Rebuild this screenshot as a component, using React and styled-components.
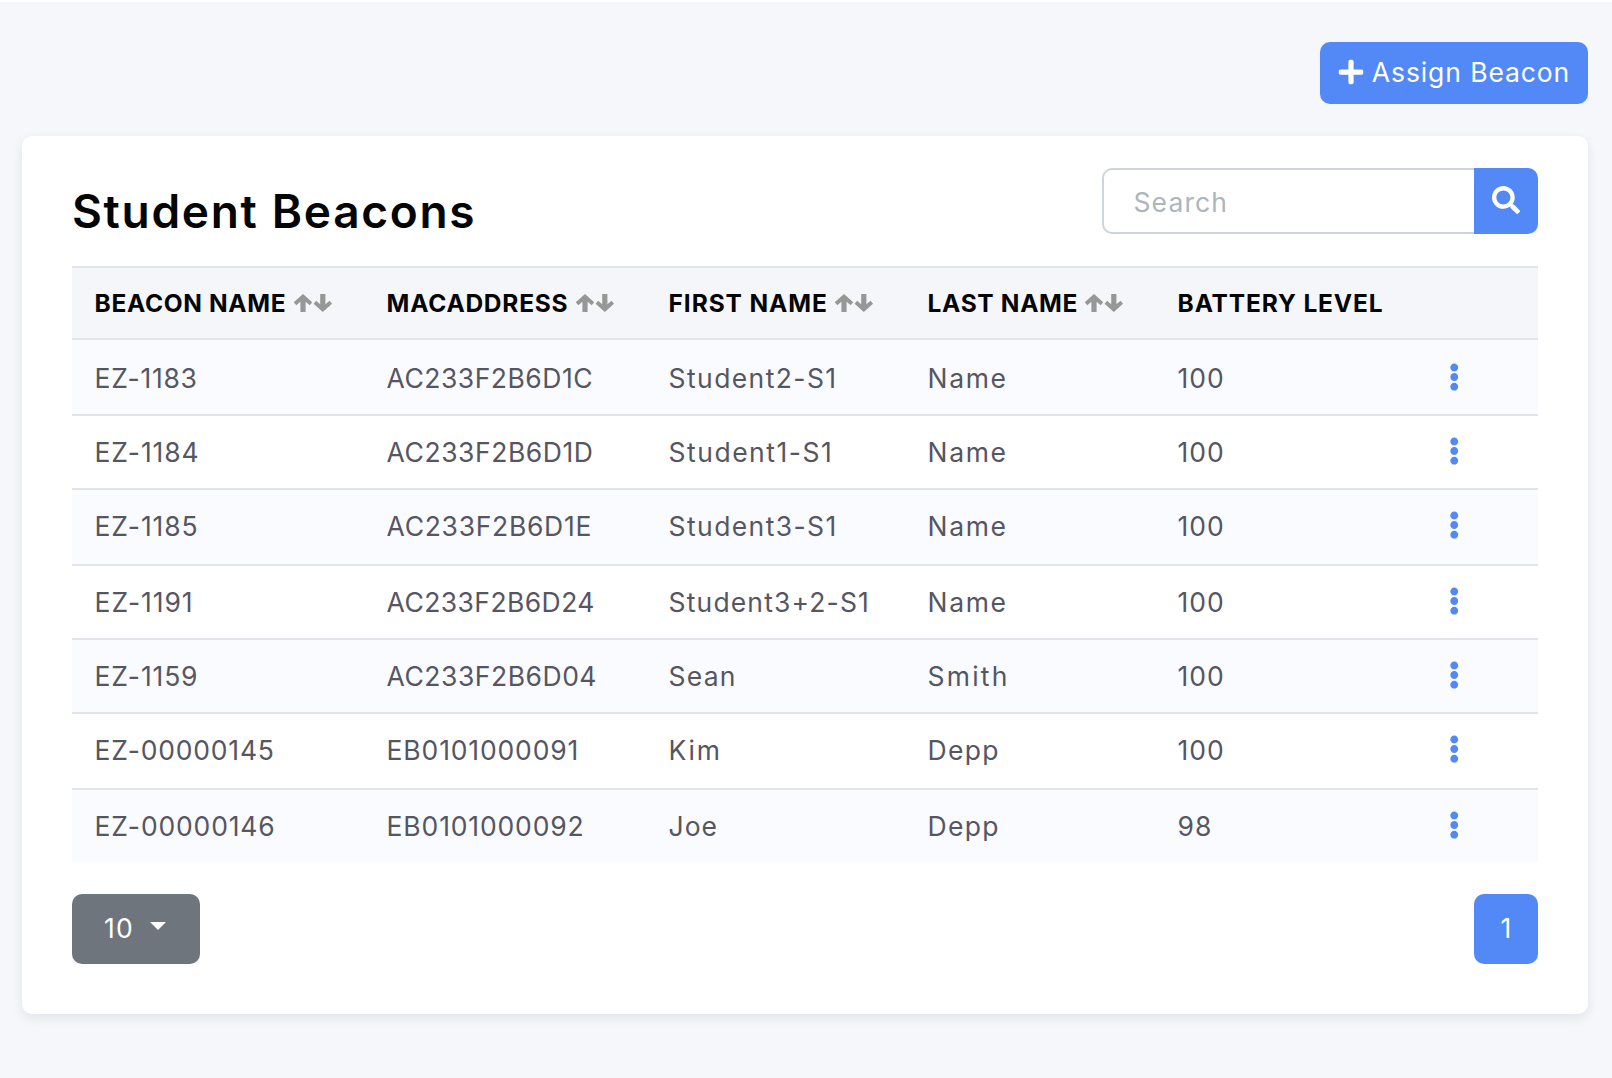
import React from "react";
import styled, { createGlobalStyle } from "styled-components";
import { FaPlus, FaSearch, FaEllipsisV } from "react-icons/fa";

const color = {
  page: "#f5f7fb",
  primary: "#5289f7",
  secondary: "#6e757c",
  heading: "#050505",
  text: "#555662",
  line: "#e2e4e9",
  stripe: "#fafbff",
  sort: "#979797",
};

const GlobalStyle = createGlobalStyle`
  *, *::before, *::after { box-sizing: border-box; }
  body {
    margin: 0;
    background: ${color.page};
    color: ${color.text};
    font-family: Inter, "Liberation Sans", sans-serif;
    font-size: 26.5px;
    line-height: 38px;
  }
  button, input { font: inherit; }
`;

const Page = styled.main`
  min-height: 1078px;
  padding: 40px 24px 64px 22px;
  border-top: 2px solid #fff;
`;

const Toolbar = styled.div`
  display: flex;
  justify-content: flex-end;
  margin-bottom: 32px;
`;

const PrimaryButton = styled.button`
  display: flex;
  align-items: center;
  justify-content: center;
  border: 0;
  color: #fff;
  background: ${color.primary};
`;

const AssignButton = styled(PrimaryButton)`
  width: 268px;
  height: 62px;
  padding: 0 1px 2px 0;
  gap: 7px;
  border-radius: 10px;
`;

const Card = styled.section`
  padding: 32px 50px 50px;
  border-radius: 10px;
  background: #fff;
  box-shadow: 0 4px 12px rgba(20, 20, 40, 0.085);
`;

const CardHeader = styled.header`
  display: flex;
  justify-content: space-between;
  align-items: flex-start;
  height: 98px;
`;

const Title = styled.h1`
  margin: 16px 0 0;
  font-size: 46px;
  line-height: 54px;
  font-weight: 600;
  letter-spacing: 1.7px;
  color: ${color.heading};
`;

const SearchGroup = styled.div`
  display: flex;
  height: 66px;
`;

const SearchInput = styled.input`
  width: 372px;
  padding: 1px 12px 0 29.5px;
  border: 2px solid #ced4d9;
  border-right: 0;
  border-radius: 10px 0 0 10px;
  outline: 0;
  background: #fff;
  letter-spacing: 1.1px;
  &::placeholder { color: #adb5bd; opacity: 1; }
`;

const SearchButton = styled(PrimaryButton)`
  width: 64px;
  padding: 0 0 3px;
  border-radius: 0 10px 10px 0;
`;

const Table = styled.div`
  display: flex;
  flex-direction: column;
`;

const Row = styled.div`
  display: grid;
  grid-template-columns: 292px 282px 259px 250px 271px 1fr;
  align-items: start;
  padding-left: 22.6px;
  border-top: 2px solid ${color.line};
`;

const HeadRow = styled(Row)`
  height: 72px;
  padding-top: 16px;
  background: #f5f6fa;
`;

const BodyRow = styled(Row)`
  height: ${(p) => (p.$tall ? 76 : 74)}px;
  padding-top: ${(p) => (p.$first ? 19 : 17)}px;
  background: ${(p) => (p.$striped ? color.stripe : "#fff")};
`;

const HeadCell = styled.div`
  display: flex;
  align-items: center;
  gap: 7.3px;
  font-size: 24.5px;
  font-weight: 700;
  color: ${color.heading};
  white-space: nowrap;
`;

const Text = styled.span`
  letter-spacing: ${(p) => p.$track || 0}px;
  white-space: nowrap;
`;

const MenuButton = styled.button`
  display: flex;
  width: 10.5px;
  height: 28px;
  margin-top: 4px;
  padding: 0;
  border: 0;
  background: none;
  color: ${color.primary};
  svg { width: 10.5px; height: 28px; }
`;

const SortArrows = styled.svg`
  flex: none;
  width: 38px;
  height: 18px;
  fill: ${color.sort};
`;

const CardFooter = styled.footer`
  display: flex;
  justify-content: space-between;
  margin-top: 32px;
`;

const PageSize = styled.button`
  display: flex;
  align-items: center;
  gap: 16.5px;
  width: 128px;
  height: 70px;
  padding: 0 0 2px 32px;
  border: 0;
  border-radius: 10px;
  color: #fff;
  background: ${color.secondary};
`;

const Caret = styled.span`
  margin-top: -4px;
  border-top: 8px solid #fff;
  border-left: 8px solid transparent;
  border-right: 8px solid transparent;
`;

const PageButton = styled(PrimaryButton)`
  width: 64px;
  height: 70px;
  padding: 0 0 2px;
  border-radius: 10px;
`;

const columns = [
  { label: "BEACON NAME", track: 0.65, sortable: true },
  { label: "MACADDRESS", track: 0.75, sortable: true },
  { label: "FIRST NAME", track: 0.9, sortable: true },
  { label: "LAST NAME", track: 0.65, sortable: true },
  { label: "BATTERY LEVEL", track: 0.85 },
];

/* Each cell is its text followed by its letter spacing. */
const beacons = [
  [["EZ-1183", 0.7], ["AC233F2B6D1C", 0.5], ["Student2-S1", 1.4], ["Name", 1.6], ["100", 0.9]],
  [["EZ-1184", 0.85], ["AC233F2B6D1D", 0.55], ["Student1-S1", 1.5], ["Name", 1.6], ["100", 0.9]],
  [["EZ-1185", 0.85], ["AC233F2B6D1E", 0.7], ["Student3-S1", 1.4], ["Name", 1.6], ["100", 0.9]],
  [["EZ-1191", 0.9], ["AC233F2B6D24", 0.42], ["Student3+2-S1", 1.15], ["Name", 1.6], ["100", 0.9]],
  [["EZ-1159", 0.85], ["AC233F2B6D04", 0.52], ["Sean", 1.2], ["Smith", 2.2], ["100", 0.9]],
  [["EZ-00000145", 0.8], ["EB0101000091", 0.85], ["Kim", 1.8], ["Depp", 1.3], ["100", 0.9]],
  [["EZ-00000146", 0.85], ["EB0101000092", 0.85], ["Joe", 1], ["Depp", 1.3], ["98", 1]],
];

function SortIcon() {
  return (
    <SortArrows viewBox="0 0 38 18" aria-hidden="true">
      <path d="M9 0L18.2 8.2L15.7 11.3L11.6 7.8V18H6.4V7.8L2.3 11.3L-.2 8.2Z" />
      <path d="M28.8 18L38 9.8L35.5 6.7L31.4 10.2V0H26.2V10.2L22.1 6.7L19.6 9.8Z" />
    </SortArrows>
  );
}

export default function App() {
  return (
    <>
      <GlobalStyle />
      <Page>
        <Toolbar>
          <AssignButton type="button">
            <FaPlus size={28} />
            <Text $track={0.9}>Assign Beacon</Text>
          </AssignButton>
        </Toolbar>
        <Card>
          <CardHeader>
            <Title>Student Beacons</Title>
            <SearchGroup>
              <SearchInput placeholder="Search" aria-label="Search" />
              <SearchButton type="button" aria-label="Submit search">
                <FaSearch size={28} />
              </SearchButton>
            </SearchGroup>
          </CardHeader>
          <Table role="table">
            <HeadRow role="row">
              {columns.map((c) => (
                <HeadCell key={c.label} role="columnheader">
                  <Text $track={c.track}>{c.label}</Text>
                  {c.sortable && <SortIcon />}
                </HeadCell>
              ))}
            </HeadRow>
            {beacons.map((cells, i) => (
              <BodyRow
                key={cells[0][0]}
                role="row"
                $first={i === 0}
                $tall={i === 0 || i === 2 || i === 5}
                $striped={i % 2 === 0}
              >
                {cells.map(([text, track], c) => (
                  <Text key={c} role="cell" $track={track}>
                    {text}
                  </Text>
                ))}
                <MenuButton type="button" aria-label="Row actions">
                  <FaEllipsisV />
                </MenuButton>
              </BodyRow>
            ))}
          </Table>
          <CardFooter>
            <PageSize type="button">
              <Text $track={1.1}>10</Text>
              <Caret />
            </PageSize>
            <PageButton type="button">
              <Text>1</Text>
            </PageButton>
          </CardFooter>
        </Card>
      </Page>
    </>
  );
}
